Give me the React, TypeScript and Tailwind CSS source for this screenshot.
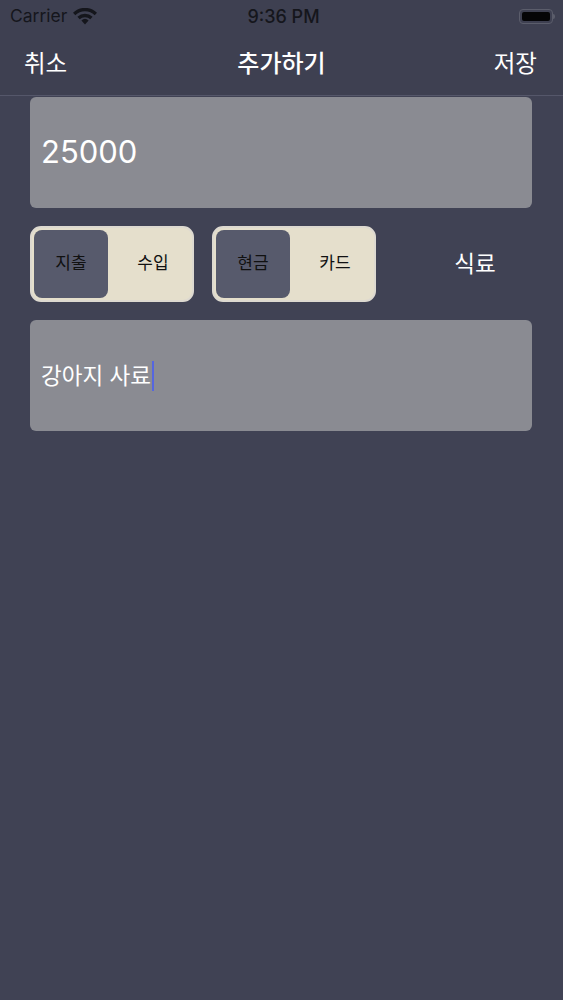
import React from "react";

const FONT = { fontFamily: 'Inter, "Noto Sans CJK KR", sans-serif' };

function Wifi() {
  return (
    <svg width="26" height="17" viewBox="0 0 26 17" className="text-[#15161c]">
      <path d="M13 16.5l3.6-4.1a5.5 5.5 0 0 0-7.2 0z" fill="currentColor" />
      <path d="M5.4 8.7a11 11 0 0 1 15.2 0l-2.3 2.6a7.6 7.6 0 0 0-10.6 0z" fill="currentColor" />
      <path d="M1 4.7a17.3 17.3 0 0 1 24 0l-2.3 2.6a13.9 13.9 0 0 0-19.4 0z" fill="currentColor" />
    </svg>
  );
}

function Battery() {
  return (
    <div className="flex items-center">
      <div className="w-[34px] h-[15px] rounded-[4px] border border-[#5b5d6b] p-[2px]">
        <div className="w-full h-full rounded-[2px] bg-[#050507]" />
      </div>
      <div className="w-[2px] h-[5px] rounded-r bg-[#5b5d6b]" />
    </div>
  );
}

function Segment({ left, right }: { left: string; right: string }) {
  return (
    <div className="w-[164px] h-[76px] rounded-[11px] border-2 border-[#ddd9d0] bg-[#e5dfcc] p-[2px] flex">
      <div className="w-[74px] h-full rounded-[8px] bg-[#575a6c] flex items-center justify-center text-[17px] text-[#111]">
        {left}
      </div>
      <div className="flex-1 flex items-center justify-center pl-[8px] text-[17px] text-[#111]">{right}</div>
    </div>
  );
}

export default function App() {
  return (
    <div className="w-[563px] h-[1000px] bg-[#404254] flex flex-col" style={FONT}>
      <div className="h-[32px] bg-[#3e4051] flex items-center px-[10px] relative">
        <div className="flex items-center gap-[5px]">
          <span className="text-[17.5px] text-[#15161c]">Carrier</span>
          <Wifi />
        </div>
        <span className="absolute left-1/2 -translate-x-1/2 ml-[2px] text-[18px] font-medium text-[#15161c]">9:36 PM</span>
        <div className="ml-auto mr-[-2px]">
          <Battery />
        </div>
      </div>
      <div className="h-[64px] bg-[#3e4051] border-b border-[#55576a] flex items-center justify-between px-[24px] relative">
        <span className="text-[23.5px] text-white">취소</span>
        <span className="absolute left-1/2 -translate-x-1/2 text-[24px] font-medium text-white">추가하기</span>
        <span className="text-[23.5px] text-white mr-[2px]">저장</span>
      </div>
      <div className="px-[30px] pr-[31px] flex flex-col">
        <div className="mt-[1px] h-[111px] rounded-[6px] bg-[#8a8b92] flex items-center px-[11px]">
          <span className="text-[31px] text-white">25000</span>
        </div>
        <div className="mt-[18px] flex items-center gap-[18px]">
          <Segment left="지출" right="수입" />
          <Segment left="현금" right="카드" />
          <div className="flex-1 flex justify-center pl-[24px]">
            <span className="text-[22.5px] text-white">식료</span>
          </div>
        </div>
        <div className="mt-[18px] h-[111px] rounded-[6px] bg-[#8a8b92] flex items-center px-[11px]">
          <span className="text-[22.5px] text-white">강아지 사료</span>
          <span className="w-[2px] h-[30px] bg-[#5566e0] ml-[1px]" />
        </div>
      </div>
    </div>
  );
}
